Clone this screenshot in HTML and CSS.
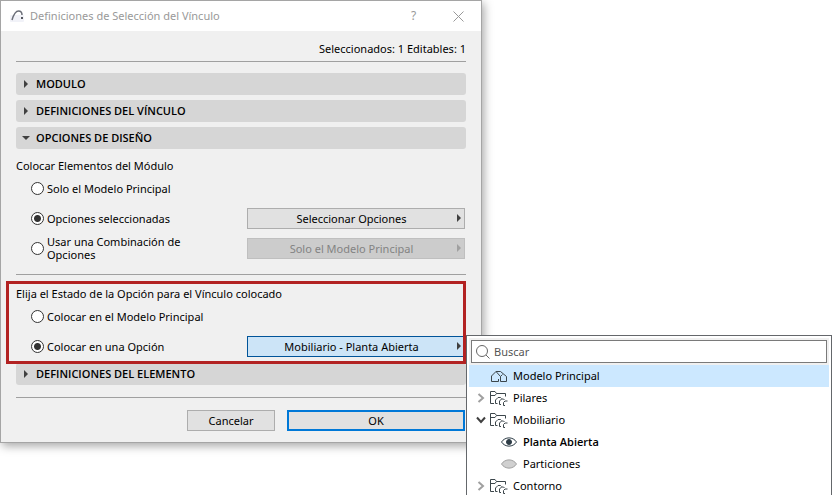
FILE: index.html
```html
<!DOCTYPE html>
<html lang="es">

<head>
    <meta charset="UTF-8">
    <meta name="viewport" content="width=device-width, initial-scale=1.0">
    <title>Definiciones de Selección del Vínculo</title>
    <link rel="stylesheet" href="styles.css">
</head>

<body>
    <!-- shared icons -->
    <svg class="sprite" aria-hidden="true">
        <symbol id="folder" viewBox="0 0 18 16">
            <path d="M4 13.500H.5V1.500H5L6.500 3.500H15.500V6.500M.5 5.500H5L6.500 3.500" />
            <path d="M7.500 13.500H5.500V10L8 7.500H10.500L11.500 8.500M11 14.500H9.500V11L11.500 9H13.500L14.500 10M15 15.500H13.500V12.500L15 11H17.500" />
        </symbol>
        <symbol id="arrow" viewBox="0 0 4 8">
            <path d="M0 0L4 4L0 8Z" />
        </symbol>
        <symbol id="chevron" viewBox="0 0 8 10">
            <path d="M1.500 1L6 5L1.500 9" />
        </symbol>
    </svg>

    <main class="dialog">
        <header class="titlebar">
            <svg class="logo" viewBox="0 0 14 14">
                <rect x="0" y="6" width="14" height="7" rx="1" fill="#f1f2f8" />
                <path d="M2 11C3.500 6 5.500 2 8.500 2C11 2 12 3.500 12 6" fill="none" stroke="#6b6e78" stroke-width="1.500" />
                <path d="M11 8H13V10H11Z" fill="#55575f" />
            </svg>
            <h1>Definiciones de Selección del Vínculo</h1>
            <button class="title-button" aria-label="Ayuda">?</button>
            <button class="title-button" aria-label="Cerrar">
                <svg class="close" viewBox="0 0 11 11"><path d="M.5 .5L10.500 10.500M10.500 .5L.5 10.500" /></svg>
            </button>
        </header>

        <form class="content">
            <p class="status">Seleccionados: 1 Editables: 1</p>
            <hr>
            <div class="panels">
                <button type="button" class="panel"><svg class="arrow"><use href="#arrow" /></svg>MODULO</button>
                <button type="button" class="panel"><svg class="arrow"><use href="#arrow" /></svg>DEFINICIONES DEL VÍNCULO</button>
                <button type="button" class="panel open"><svg class="arrow"><use href="#arrow" /></svg>OPCIONES DE DISEÑO</button>
            </div>

            <section class="group">
                <h2>Colocar Elementos del Módulo</h2>
                <div class="row">
                    <label><input type="radio" name="elementos"><span>Solo el Modelo Principal</span></label>
                </div>
                <div class="row">
                    <label><input type="radio" name="elementos" checked><span>Opciones seleccionadas</span></label>
                    <button type="button" class="picker"><span>Seleccionar Opciones</span><svg class="arrow"><use href="#arrow" /></svg></button>
                </div>
                <div class="row">
                    <label><input type="radio" name="elementos"><span>Usar una Combinación de Opciones</span></label>
                    <button type="button" class="picker" disabled><span>Solo el Modelo Principal</span><svg class="arrow"><use href="#arrow" /></svg></button>
                </div>
            </section>
            <hr>

            <section class="group highlight">
                <h2>Elija el Estado de la Opción para el Vínculo colocado</h2>
                <div class="row">
                    <label><input type="radio" name="estado"><span>Colocar en el Modelo Principal</span></label>
                </div>
                <div class="row">
                    <label><input type="radio" name="estado" checked><span>Colocar en una Opción</span></label>
                    <div class="dropdown">
                        <button type="button" class="picker active"><span>Mobiliario - Planta Abierta</span><svg class="arrow"><use href="#arrow" /></svg></button>
                        <div class="menu">
                            <div class="search">
                                <svg class="lens" viewBox="0 0 14 14"><circle cx="6" cy="6" r="5.500" /><path d="M10 10L13.500 13.500" /></svg>
                                <input type="text" placeholder="Buscar" aria-label="Buscar">
                            </div>
                            <ul>
                                <li class="selected">
                                    <span class="toggle"></span>
                                    <svg class="icon" viewBox="0 0 18 16"><path d="M1.500 13.500V8L6 3.500H10.500L16.500 8.500V13.500H10.500V8.500L6 3.500M1.500 13.500H8.500V11M10.500 8.500L12.500 6.500" /></svg>
                                    Modelo Principal
                                </li>
                                <li>
                                    <svg class="toggle"><use href="#chevron" /></svg>
                                    <svg class="icon"><use href="#folder" /></svg>
                                    Pilares
                                </li>
                                <li>
                                    <svg class="toggle expanded"><use href="#chevron" /></svg>
                                    <svg class="icon"><use href="#folder" /></svg>
                                    Mobiliario
                                </li>
                                <li class="child current">
                                    <svg class="eye" viewBox="0 0 16 10"><path d="M.5 5C4 -.5 12 -.5 15.500 5C12 10.500 4 10.500 .5 5Z" /><circle cx="8" cy="5" r="2.500" /></svg>
                                    Planta Abierta
                                </li>
                                <li class="child">
                                    <svg class="eye closed" viewBox="0 0 16 10"><path d="M.5 5C4 -.5 12 -.5 15.500 5C12 10.500 4 10.500 .5 5Z" /></svg>
                                    Particiones
                                </li>
                                <li>
                                    <svg class="toggle"><use href="#chevron" /></svg>
                                    <svg class="icon"><use href="#folder" /></svg>
                                    Contorno
                                </li>
                            </ul>
                        </div>
                    </div>
                </div>
            </section>

            <button type="button" class="panel last"><svg class="arrow"><use href="#arrow" /></svg>DEFINICIONES DEL ELEMENTO</button>
            <hr>
            <footer class="actions">
                <button type="button" class="cancel">Cancelar</button>
                <button type="button" class="ok">OK</button>
            </footer>
        </form>
    </main>
</body>

</html>
```
FILE: styles.css
```css
* {
    box-sizing: border-box;
}

body {
    margin: 0;
    height: 100vh;
    overflow: hidden;
    background: #fff;
    color: #000;
    font: 11px/14px "Segoe UI", "Noto Sans", sans-serif;
}

h1,
h2,
p,
ul {
    margin: 0;
    padding: 0;
    font-size: inherit;
    font-weight: normal;
}

button,
input {
    margin: 0;
    padding: 0;
    font: inherit;
    color: inherit;
}

hr {
    width: 100%;
    height: 1px;
    margin: 0;
    border: 0;
    background: #a0a0a0;
}

.sprite {
    display: none;
}

.dialog {
    width: 482px;
    max-width: 100%;
    border: 1px solid #a5a5a5;
    background: #f0f0f0;
    box-shadow: 2px 3px 9px rgba(0, 0, 0, .35);
}

.titlebar {
    display: flex;
    align-items: center;
    height: 30px;
    background: #fff;
    color: #999;

    h1 {
        flex-grow: 1;
        margin-left: 6px;
    }
}

.logo {
    width: 14px;
    height: 14px;
    margin-left: 9px;
}

.title-button {
    display: flex;
    justify-content: center;
    align-items: center;
    width: 45px;
    height: 30px;
    border: 0;
    background: none;
    font-size: 12px;
}

.close {
    width: 11px;
    height: 11px;
    fill: none;
    stroke: #999;
}

.content {
    display: flex;
    flex-direction: column;
    padding: 11px 15px;
}

.status {
    margin-bottom: 5px;
    text-align: right;
}

.panels {
    display: flex;
    flex-direction: column;
    gap: 5px;
    margin: 11px 0 10px;
}

.panel {
    display: flex;
    align-items: center;
    gap: 6px;
    height: 22px;
    padding-left: 6px;
    border: 0;
    border-radius: 3px;
    background: #d6d6d6;
    font-family: "Segoe UI", "Open Sans", sans-serif;
    font-weight: 600;

    &.open .arrow {
        transform: rotate(90deg);
    }

    &.last {
        margin: -1px 0 12px;
    }
}

.arrow {
    width: 4px;
    height: 8px;
    margin: 0 2px;
    flex-shrink: 0;
    fill: #404040;
}

.group {
    margin-bottom: 11px;
}

.row {
    display: flex;
    align-items: center;
    height: 30px;
    padding-left: 15px;

    label {
        display: flex;
        align-items: center;
        gap: 3px;
        width: 216px;
        line-height: 13px;

        span {
            max-width: 150px;
        }
    }

    .picker {
        flex: 1;
        margin-right: 1px;
    }
}

input[type="radio"] {
    appearance: none;
    flex-shrink: 0;
    width: 13px;
    height: 13px;
    border: 1px solid #333;
    border-radius: 50%;
    background: #fff;

    &:checked {
        background: radial-gradient(circle, #333 3px, #fff 4px);
    }
}

.picker {
    display: flex;
    align-items: center;
    height: 21px;
    border: 1px solid #adadad;
    background: #e1e1e1;

    span {
        flex: 1;
        padding-top: 1px;
    }

    .arrow {
        margin-right: 3px;
    }

    &:disabled {
        border-color: #bfbfbf;
        background: #ccc;
        color: #838383;

        .arrow {
            fill: #a0a0a0;
        }
    }
}

.highlight {
    position: relative;
    margin: 6px 0 0 -10px;
    padding: 3px 0 0 7px;
    border: 3px solid #b22222;

    label span {
        max-width: none;
    }
}

.dropdown {
    position: relative;
    display: flex;
    flex: 1;

    .active {
        margin-right: 0;
        border-color: #005499;
        border-right: 0;
        background: #cce4f7;
    }

    .arrow {
        margin-right: 2px;
    }
}

.menu {
    position: absolute;
    left: calc(100% + 3px);
    top: -1px;
    width: 366px;
    height: 180px;
    padding: 2px;
    border: 1px solid #64676b;
    background: #fff;

    ul {
        list-style: none;
    }

    li {
        display: flex;
        align-items: center;
        height: 22px;
        padding-left: 8px;
    }

    .selected {
        background: #cce8ff;
    }

    .child {
        padding-left: 32px;
    }

    .current {
        font-family: "Segoe UI", "Open Sans", sans-serif;
        font-weight: 600;
    }
}

.search {
    position: relative;
    display: flex;
    padding: 2px;
    background: #f0f0f0;

    input {
        flex: 1;
        height: 23px;
        padding-left: 22px;
        border: 1px solid #7a7a7a;
        background: #fff;

        &::placeholder {
            color: #555;
        }
    }
}

.lens {
    position: absolute;
    left: 7px;
    top: 7px;
    width: 14px;
    height: 14px;
    fill: none;
    stroke: #666;
}

.toggle {
    width: 8px;
    height: 10px;
    margin-right: 5px;
    fill: none;
    stroke: #a0a0a0;
    stroke-width: 2;

    &.expanded {
        transform: rotate(90deg);
        stroke: #404040;
    }
}

.icon {
    width: 18px;
    height: 16px;
    margin-right: 5px;
    fill: none;
    stroke: #3c464b;
}

.eye {
    width: 16px;
    height: 10px;
    margin-right: 6px;
    fill: #fff;
    stroke: #2d3c46;

    circle {
        fill: #2d3c46;
    }

    &.closed {
        fill: #d0d0d0;
        stroke: #a0a0a0;
    }
}

.actions {
    display: flex;
    gap: 12px;
    margin: 12px 1px 0 171px;

    button {
        height: 21px;
        border: 1px solid #adadad;
        background: #e1e1e1;
    }

    .cancel {
        width: 88px;
    }

    .ok {
        flex: 1;
        border: 2px solid #0078d7;
    }
}
```
